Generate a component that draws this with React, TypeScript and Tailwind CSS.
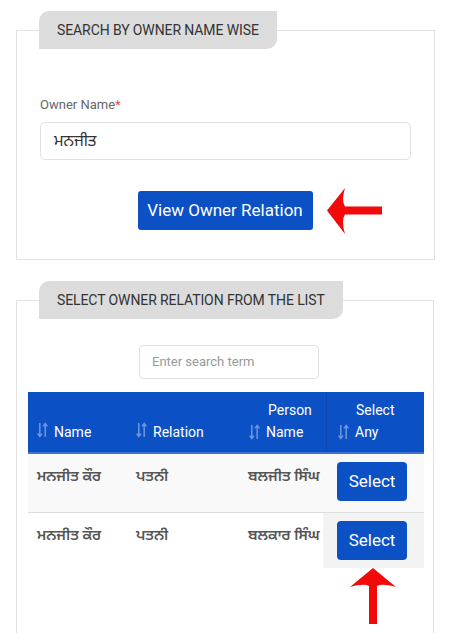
import type { ReactNode } from 'react'

const ROWS = [
  { name: 'ਮਨਜੀਤ ਕੌਰ', relation: 'ਪਤਨੀ', person: 'ਬਲਜੀਤ ਸਿੰਘ', hover: false },
  { name: 'ਮਨਜੀਤ ਕੌਰ', relation: 'ਪਤਨੀ', person: 'ਬਲਕਾਰ ਸਿੰਘ', hover: true },
]

function SortIcon() {
  return (
    <svg width="11" height="16" viewBox="0 0 11 16" className="inline-block shrink-0" fill="none" stroke="#6f95dd" strokeWidth="1.5">
      <path d="M2.8 1v13.5M0.6 11.6L2.8 14.6 5 11.6" />
      <path d="M8.2 15V1.5M6 4.4L8.2 1.4 10.4 4.4" />
    </svg>
  )
}

function Tab({ children }: { children: ReactNode }) {
  return (
    <div className="ml-[22px] -mt-[20px] w-fit h-[38px] flex items-center px-[18px] bg-[#dcdcdc] rounded-tl-[10px] rounded-br-[10px] text-[14px] text-[#333] uppercase tracking-[-0.1px]">
      {children}
    </div>
  )
}

function LeftArrow() {
  return (
    <svg width="58" height="48" viewBox="0 0 58 48" className="absolute left-[286px] top-[-4px]">
      <path d="M1 23.5 L19 1 Q15 14 19 19.5 L56 19.5 L56 27.5 L19 27.5 Q15 33 19 47 Z" fill="#f20a0a" />
    </svg>
  )
}

function UpArrow() {
  return (
    <svg width="48" height="58" viewBox="0 0 48 58" className="absolute left-[349px] top-[568px]">
      <path d="M24 0 L47 19 Q33 15 28 18 L28 56 L20 56 L20 18 Q15 15 1 19 Z" fill="#f20a0a" />
    </svg>
  )
}

export default function App() {
  return (
    <div className="relative w-[450px] min-h-[633px] bg-white overflow-hidden font-['Roboto','Noto_Sans_Gurmukhi','Noto_Sans',sans-serif] pt-[30px] pl-[16px] pr-[15px]">
      <div className="border border-[#e3e3e3] pb-[29px]">
        <Tab>Search by owner name wise</Tab>
        <div className="px-[23px] pt-[48px]">
          <label className="block text-[13px] text-[#666] leading-[16px]">
            Owner Name<span className="text-[#d9534f]">*</span>
          </label>
          <div className="mt-[9px] h-[38px] border border-[#e2e2e2] rounded-[5px] flex items-center px-[13px] text-[16px] text-[#333]">
            ਮਨਜੀਤ
          </div>
          <div className="relative mt-[31px] flex justify-center">
            <button className="w-[175px] h-[39px] rounded-[3px] bg-[#0b51c5] text-white text-[17px] -ml-[1px]">
              View Owner Relation
            </button>
            <LeftArrow />
          </div>
        </div>
      </div>

      <div className="mt-[40px] border border-[#e3e3e3] pb-[80px] min-h-[340px] mr-[1px]">
        <Tab>Select owner relation from the list</Tab>
        <div className="flex justify-center pt-[26px] pl-[8px]">
          <div className="w-[180px] h-[34px] border border-[#e2e2e2] rounded-[4px] flex items-center px-[12px] text-[13px] text-[#999]">
            Enter search term
          </div>
        </div>
        <div className="mt-[13px] ml-[11px] mr-[9px]">
          <div className="grid grid-cols-[99px_112px_87px_98px] h-[62px] bg-[#0b51c5] border-b-2 border-[#3b73d6] text-white text-[14px] leading-[22px]">
            <div className="flex items-end gap-[6px] pl-[9px] pb-[9px]"><span className="pb-[3px]"><SortIcon /></span>Name</div>
            <div className="flex items-end gap-[6px] pl-[9px] pb-[9px]"><span className="pb-[3px]"><SortIcon /></span>Relation</div>
            <div className="flex flex-col justify-end pl-[10px] pb-[9px]">
              <div className="pl-[19px]">Person</div>
              <div className="flex items-center gap-[6px]"><SortIcon />Name</div>
            </div>
            <div className="flex flex-col justify-end pl-[11px] pb-[9px] border-l border-[#0a47b0]">
              <div className="pl-[18px]">Select</div>
              <div className="flex items-center gap-[6px]"><SortIcon />Any</div>
            </div>
          </div>
          {ROWS.map((r, i) => (
            <div
              key={i}
              className={`grid grid-cols-[99px_112px_87px_98px] ${i === 0 ? 'bg-[#f9f9f9] h-[59px] border-b border-[#dddddd]' : 'bg-white h-[55px]'} text-[15px] font-semibold text-[#555]`}
            >
              <div className="pl-[9px] pt-[11px] whitespace-nowrap">{r.name}</div>
              <div className="pl-[9px] pt-[11px] whitespace-nowrap">{r.relation}</div>
              <div className="pl-[9px] pt-[11px] whitespace-nowrap overflow-hidden">{r.person}</div>
              <div className={`flex justify-center pt-[8px] -ml-[3px] ${r.hover ? 'bg-[#f3f3f3]' : ''}`}>
                <button className="w-[70px] h-[39px] rounded-[4px] bg-[#0b51c5] text-white text-[17px] font-normal -ml-[3px]">
                  Select
                </button>
              </div>
            </div>
          ))}
        </div>
      </div>
      <UpArrow />
    </div>
  )
}
